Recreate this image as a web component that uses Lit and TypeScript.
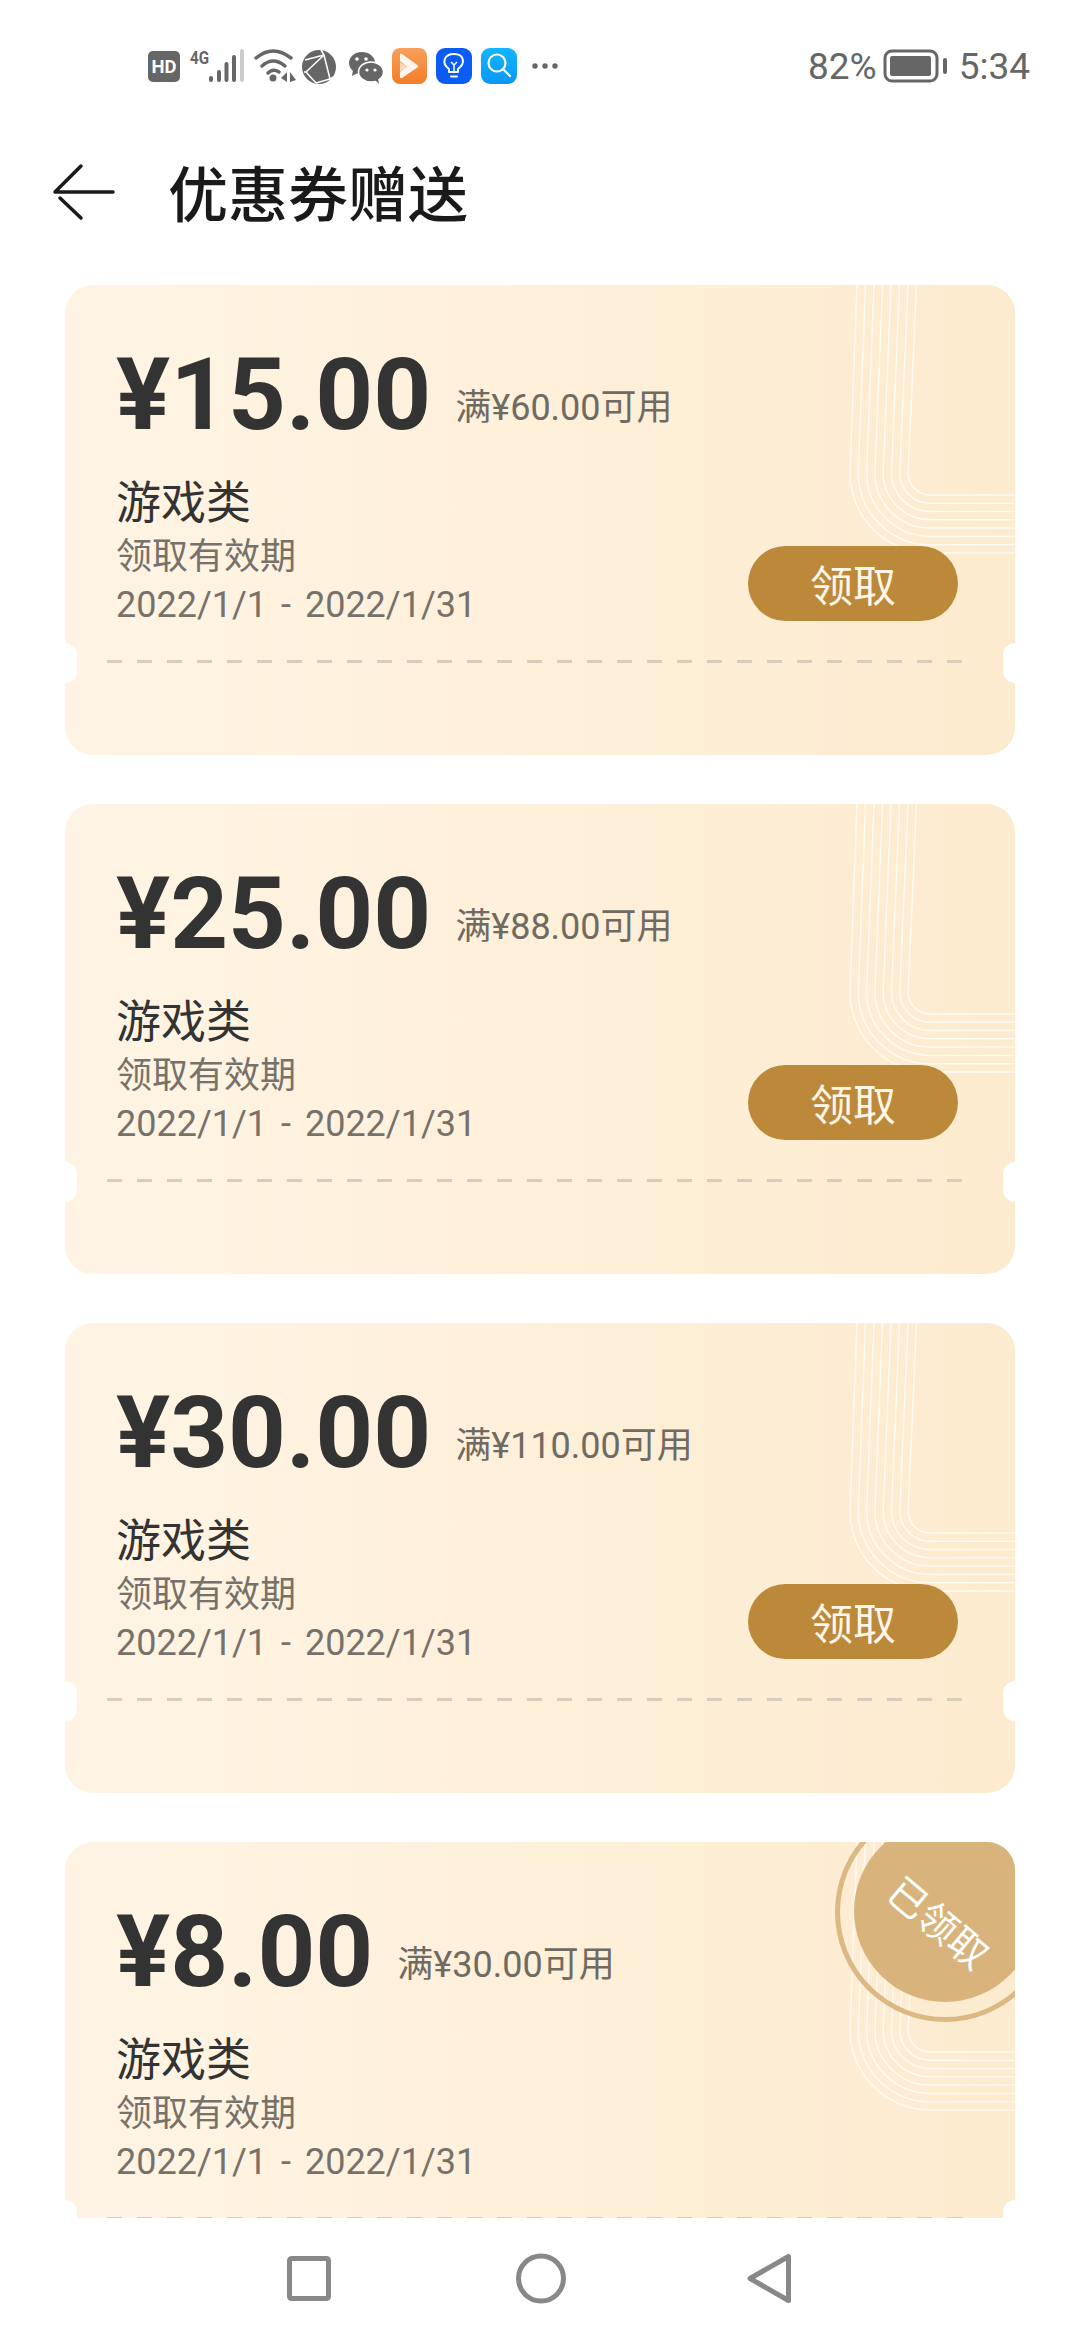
import { LitElement, html, css, svg } from "lit";
import { customElement } from "lit/decorators.js";

const coupons = [
  { amount: "¥15.00", min: "满¥60.00可用", taken: false },
  { amount: "¥25.00", min: "满¥88.00可用", taken: false },
  { amount: "¥30.00", min: "满¥110.00可用", taken: false },
  { amount: "¥8.00", min: "满¥30.00可用", taken: true },
];

const lines = Array.from({ length: 8 }, (_, i) => {
  const top = 792 + 8.5 * i;
  const bx = 785 + 8.3 * i;
  const hy = 268 - 8.3 * i;
  const r = 80 - 8.3 * i;
  return `M${top} 0L${bx} ${hy - r}A${r} ${r} 0 0 0 ${bx + r} ${hy}L950 ${hy}`;
});

@customElement("app-root")
export class AppRoot extends LitElement {
  static styles = css`
    :host {
      display: flex;
      flex-direction: column;
      width: 1080px;
      height: 2340px;
      overflow: hidden;
      background: #fff;
      font-family: Roboto, "Noto Sans CJK SC", sans-serif;
    }
    .status {
      height: 132px;
      flex: none;
      display: flex;
      align-items: center;
      padding: 0 50px 0 140px;
      box-sizing: border-box;
      color: #666;
      font-size: 37px;
    }
    .status-icons { width: 420px; height: 52px; display: block; }
    .status-right { margin-left: auto; display: flex; align-items: center; }
    .battery { width: 66px; height: 36px; margin: 0 10px 0 6px; display: block; }
    .header {
      height: 118px;
      flex: none;
      display: flex;
      align-items: center;
      padding-left: 52px;
      gap: 53px;
    }
    .back { width: 63px; height: 60px; display: block; }
    .title {
      font-family: "Noto Sans CJK SC", sans-serif;
      font-size: 60px;
      line-height: 70px;
      font-weight: 500;
      color: #1a1a1a;
    }
    .list {
      flex: 1;
      min-height: 0;
      overflow: hidden;
      padding: 35px 65px 0;
      display: flex;
      flex-direction: column;
      gap: 49px;
    }
    .card {
      position: relative;
      flex: none;
      height: 470px;
      border-radius: 28px;
      overflow: hidden;
      background: linear-gradient(90deg, #fff4e4, #fdebcf);
      box-sizing: border-box;
      padding: 50px 51px 0;
    }
    .deco { position: absolute; inset: 0; width: 950px; height: 470px; }
    .notch {
      position: absolute;
      top: 358px;
      width: 24px;
      height: 40px;
      border-radius: 12px;
      background: #fff;
    }
    .notch.l { left: -12px; }
    .notch.r { right: -12px; }
    .top {
      position: relative;
      display: flex;
      align-items: flex-end;
      gap: 24px;
      height: 120px;
    }
    .amount {
      font-size: 101px;
      line-height: 120px;
      font-weight: 700;
      color: #333;
    }
    .min {
      font-size: 36px;
      line-height: 42px;
      color: #6f6a62;
      margin-bottom: 26px;
    }
    .body {
      position: relative;
      display: flex;
      justify-content: space-between;
      align-items: flex-end;
      margin-top: 18px;
      padding-right: 6px;
    }
    .cat {
      font-family: "Noto Sans CJK SC", sans-serif;
      font-size: 45px;
      line-height: 53px;
      color: #333;
    }
    .valid, .date {
      font-size: 36px;
      line-height: 49px;
      color: #77716a;
    }
    .valid { font-family: "Noto Sans CJK SC", sans-serif; line-height: 55px; }
    .date { word-spacing: 5px; }
    .btn {
      width: 210px;
      height: 75px;
      border-radius: 38px;
      background: #bc893b;
      color: #fff6e8;
      font-family: "Noto Sans CJK SC", sans-serif;
      font-size: 43px;
      line-height: 75px;
      text-align: center;
      margin-bottom: 9px;
    }
    .dash {
      position: absolute;
      left: 42px;
      right: 53px;
      top: 375px;
      height: 3px;
      background: repeating-linear-gradient(90deg, #d8ccbc 0 15px, transparent 15px 30px);
    }
    .ring {
      position: absolute;
      left: 770px;
      top: -40px;
      width: 220px;
      height: 220px;
      box-sizing: border-box;
      border: 5px solid #dcb883;
      border-radius: 50%;
    }
    .stamp {
      position: absolute;
      left: 789px;
      top: -22px;
      width: 182px;
      height: 182px;
      border-radius: 50%;
      background: #d8b47c;
    }
    .stamp-text {
      position: absolute;
      left: 780px;
      top: 54px;
      width: 190px;
      text-align: center;
      transform: rotate(40deg);
      font-family: "Noto Sans CJK SC", sans-serif;
      font-size: 39px;
      line-height: 50px;
      color: #fff;
    }
    .nav { height: 122px; flex: none; }
    .nav svg { display: block; width: 1080px; height: 122px; }
  `;

  private statusIcons() {
    return html`<svg class="status-icons" viewBox="140 40 420 52">
      <rect x="148" y="51" width="32" height="31" rx="5" fill="#666" />
      <text x="164" y="73" text-anchor="middle" font-family="Roboto" font-weight="700" font-size="19" fill="#fff" textLength="25" lengthAdjust="spacingAndGlyphs">HD</text>
      <text x="190" y="63.5" font-family="Roboto" font-weight="700" font-size="18" fill="#666" textLength="19" lengthAdjust="spacingAndGlyphs">4G</text>
      <g fill="#666">
        <rect x="209" y="76" width="4" height="6" rx="2" />
        <rect x="217" y="70" width="4" height="12" rx="2" />
        <rect x="224.500" y="62" width="4" height="20" rx="2" />
        <rect x="232" y="55" width="4" height="27" rx="2" />
        <rect x="240" y="49" width="4" height="33" rx="2" fill="#ccc" />
      </g>
      <g fill="none" stroke="#666" stroke-width="3.500" stroke-linecap="round">
        <path d="M256 58Q273 44 291 58" />
        <path d="M262 66Q273 56 285 66" />
        <path d="M268 73Q273 68 279 72" />
      </g>
      <circle cx="273" cy="78" r="3.500" fill="#666" />
      <path d="M287 72v10l-6 -4zM290 72v10l6 -2z" fill="#666" />
      <circle cx="319" cy="67" r="17" fill="#666" />
      <path d="M305 60L324 55L330 79L316 83M324 55L306 72L316 83M304 72L306 72M324 55L321 50M330 79L333 77" fill="none" stroke="#fff" stroke-width="1.500" />
      <ellipse cx="362" cy="63" rx="13" ry="11" fill="#666" />
      <path d="M353 70l-1 6 6 -3z" fill="#666" />
      <ellipse cx="371" cy="72" rx="12.500" ry="10" fill="#666" stroke="#fff" stroke-width="1.500" />
      <path d="M375 80l4 4 -1 -6z" fill="#666" />
      <circle cx="357" cy="59" r="1.800" fill="#fff" />
      <circle cx="366" cy="59" r="1.800" fill="#fff" />
      <circle cx="367" cy="70" r="1.600" fill="#fff" />
      <circle cx="375" cy="70" r="1.600" fill="#fff" />
      <defs>
        <linearGradient id="o" x1="0" y1="0" x2="0" y2="1"><stop offset="0" stop-color="#f7a15a" /><stop offset="1" stop-color="#f47d28" /></linearGradient>
        <linearGradient id="c" x1="0" y1="0" x2="0" y2="1"><stop offset="0" stop-color="#12b6ff" /><stop offset="1" stop-color="#0a97f6" /></linearGradient>
      </defs>
      <rect x="392" y="48" width="35" height="36" rx="8" fill="url(#o)" />
      <path d="M400 55Q400 53 402 54L418 65.500Q419 66 418 67L402 78Q400 79 400 77L400 72L407 66.500L400 61z" fill="#fff" fill-opacity=".92" />
      <path d="M400 62L407 66.500L400 72z" fill="#fbd9bd" />
      <rect x="436" y="48" width="36" height="36" rx="9" fill="#0b5cf4" />
      <path d="M449 72v-3c-8 -6 -5 -15 5 -15s12 9 4 15v3zM451 76.500h6" fill="none" stroke="#fff" stroke-width="2" stroke-linecap="round" stroke-linejoin="round" />
      <path d="M454 72v-7l-3 -3M454 65l3 -3" fill="none" stroke="#fff" stroke-width="1.500" />
      <rect x="481" y="48" width="36" height="36" rx="9" fill="url(#c)" />
      <circle cx="497" cy="63" r="8.500" fill="none" stroke="#fff" stroke-width="2.200" />
      <path d="M503 69L510 76" stroke="#fff" stroke-width="2.200" stroke-linecap="round" />
      <g fill="#666"><circle cx="535" cy="66" r="2.700" /><circle cx="545" cy="66" r="2.700" /><circle cx="555" cy="66" r="2.700" /></g>
    </svg>`;
  }

  private card(c: (typeof coupons)[number]) {
    return html`<div class="card">
      <svg class="deco" viewBox="0 0 950 470" fill="none" stroke="#fff" stroke-opacity=".75" stroke-width="1.500">
        ${lines.map((d) => svg`<path d=${d} />`)}
      </svg>
      ${c.taken
        ? html`<div class="ring"></div>
            <div class="stamp"></div>
            <div class="stamp-text">已领取</div>`
        : ""}
      <div class="top">
        <div class="amount">${c.amount}</div>
        <div class="min">${c.min}</div>
      </div>
      <div class="body">
        <div>
          <div class="cat">游戏类</div>
          <div class="valid">领取有效期</div>
          <div class="date">2022/1/1 - 2022/1/31</div>
        </div>
        ${c.taken ? "" : html`<div class="btn">领取</div>`}
      </div>
      <div class="dash"></div>
      <div class="notch l"></div>
      <div class="notch r"></div>
    </div>`;
  }

  render() {
    return html`
      <div class="status">
        ${this.statusIcons()}
        <div class="status-right">
          <span>82%</span>
          <svg class="battery" viewBox="0 0 66 36">
            <rect x="2" y="3" width="52" height="30" rx="7" fill="none" stroke="#666" stroke-width="3" />
            <rect x="7" y="8" width="41" height="20" rx="2" fill="#666" />
            <rect x="60" y="10" width="4" height="16" rx="2" fill="#666" />
          </svg>
          <span>5:34</span>
        </div>
      </div>
      <div class="header">
        <svg class="back" viewBox="0 0 63 60" fill="none" stroke="#1a1a1a" stroke-width="3.500" stroke-linecap="round" stroke-linejoin="round">
          <path d="M3 31H61M29 5L3 31M8 37L29 57" />
        </svg>
        <div class="title">优惠券赠送</div>
      </div>
      <div class="list">${coupons.map((c) => this.card(c))}</div>
      <div class="nav">
        <svg viewBox="0 0 1080 122" fill="none" stroke="#888" stroke-width="5" stroke-linejoin="round">
          <rect x="289.500" y="40.500" width="39" height="40" rx="2" />
          <circle cx="541" cy="60.500" r="22.500" />
          <path d="M788.500 38.500V82.500L750 60.500Z" />
        </svg>
      </div>
    `;
  }
}
